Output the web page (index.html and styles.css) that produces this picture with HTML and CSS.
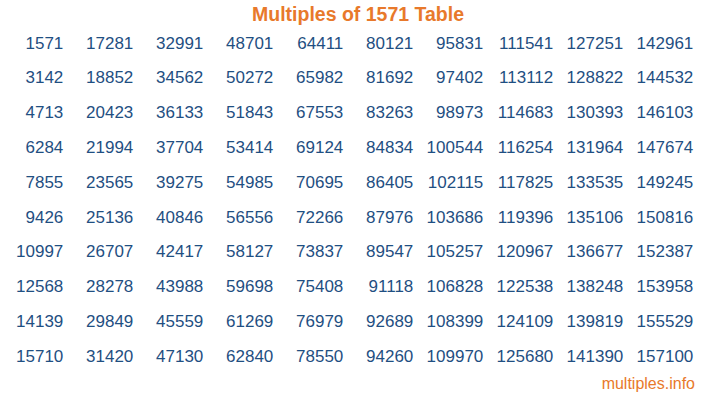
FILE: index.html
```html
<!DOCTYPE html>
<html>
<head>
<meta charset="utf-8">
<link rel="stylesheet" href="styles.css">
</head>
<body>
<div class="page">
  <h1 class="title">Multiples of 1571 Table</h1>
  <div class="grid" id="grid">
    <span>1571</span><span>17281</span><span>32991</span><span>48701</span><span>64411</span><span>80121</span><span>95831</span><span>111541</span><span>127251</span><span>142961</span>
    <span>3142</span><span>18852</span><span>34562</span><span>50272</span><span>65982</span><span>81692</span><span>97402</span><span>113112</span><span>128822</span><span>144532</span>
    <span>4713</span><span>20423</span><span>36133</span><span>51843</span><span>67553</span><span>83263</span><span>98973</span><span>114683</span><span>130393</span><span>146103</span>
    <span>6284</span><span>21994</span><span>37704</span><span>53414</span><span>69124</span><span>84834</span><span>100544</span><span>116254</span><span>131964</span><span>147674</span>
    <span>7855</span><span>23565</span><span>39275</span><span>54985</span><span>70695</span><span>86405</span><span>102115</span><span>117825</span><span>133535</span><span>149245</span>
    <span>9426</span><span>25136</span><span>40846</span><span>56556</span><span>72266</span><span>87976</span><span>103686</span><span>119396</span><span>135106</span><span>150816</span>
    <span>10997</span><span>26707</span><span>42417</span><span>58127</span><span>73837</span><span>89547</span><span>105257</span><span>120967</span><span>136677</span><span>152387</span>
    <span>12568</span><span>28278</span><span>43988</span><span>59698</span><span>75408</span><span>91118</span><span>106828</span><span>122538</span><span>138248</span><span>153958</span>
    <span>14139</span><span>29849</span><span>45559</span><span>61269</span><span>76979</span><span>92689</span><span>108399</span><span>124109</span><span>139819</span><span>155529</span>
    <span>15710</span><span>31420</span><span>47130</span><span>62840</span><span>78550</span><span>94260</span><span>109970</span><span>125680</span><span>141390</span><span>157100</span>
  </div>
  <div class="footer">multiples.info</div>
</div>
</body>
</html>
```
FILE: styles.css
```css
html, body {
  margin: 0;
  padding: 0;
  background: #ffffff;
}
.page {
  width: 716px;
  height: 400px;
  font-family: "Liberation Sans", Arial, sans-serif;
  box-sizing: border-box;
}
.title {
  margin: 0;
  height: 26.6px;
  line-height: 28px;
  font-size: 19.5px;
  font-weight: bold;
  color: #e8792b;
  text-align: center;
}
.grid {
  display: grid;
  grid-template-columns: 55.3px repeat(9, 70px);
  grid-auto-rows: 34.8px;
  padding-left: 8px;
  font-size: 17px;
  color: #1f4f82;
}
.grid span {
  text-align: right;
  line-height: 34.8px;
}
.footer {
  text-align: right;
  padding-right: 21px;
  font-size: 16px;
  line-height: 18px;
  color: #e8792b;
}
```
